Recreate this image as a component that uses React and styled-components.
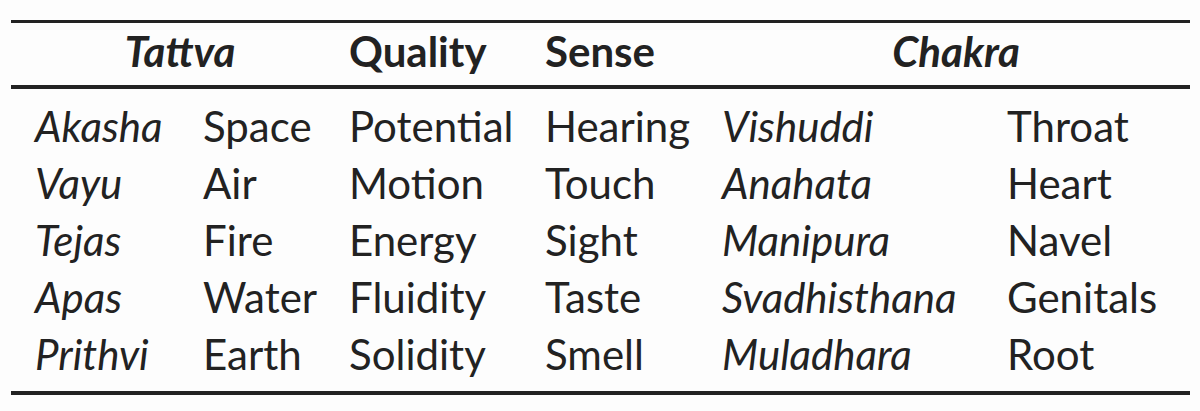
import React from "react";
import styled, { createGlobalStyle } from "styled-components";

const rows = [
  ["Akasha", "Space", "Potential", "Hearing", "Vishuddi", "Throat"],
  ["Vayu", "Air", "Motion", "Touch", "Anahata", "Heart"],
  ["Tejas", "Fire", "Energy", "Sight", "Manipura", "Navel"],
  ["Apas", "Water", "Fluidity", "Taste", "Svadhisthana", "Genitals"],
  ["Prithvi", "Earth", "Solidity", "Smell", "Muladhara", "Root"],
];

const widths = [176, 146, 196, 177, 285, 199];

// columns holding sanskrit names are set in italics
const italicCols = [0, 4];

export default function App() {
  return (
    <>
      <GlobalStyle />
      <Table>
        <colgroup>
          {widths.map((w, i) => (
            <col key={i} style={{ width: w }} />
          ))}
        </colgroup>
        <thead>
          <tr>
            <HeadCell colSpan={2} $italic $center>
              Tattva
            </HeadCell>
            <HeadCell>Quality</HeadCell>
            <HeadCell>Sense</HeadCell>
            <HeadCell colSpan={2} $italic $center>
              Chakra
            </HeadCell>
          </tr>
        </thead>
        <tbody>
          {rows.map((row) => (
            <tr key={row[0]}>
              {row.map((cell, i) => (
                <Cell key={i} $italic={italicCols.includes(i)}>
                  {cell}
                </Cell>
              ))}
            </tr>
          ))}
        </tbody>
      </Table>
    </>
  );
}

const GlobalStyle = createGlobalStyle`
  html, body {
    margin: 0;
    background: #fdfdfd;
  }
`;

const Table = styled.table`
  margin: 20px 0 0 11px;
  width: 1179px;
  table-layout: fixed;
  border-collapse: collapse;
  font-family: Lato, "Liberation Sans", sans-serif;
  font-size: 42px;
  line-height: 57px;
  color: #222;
  border-top: 3px solid #222;
  border-bottom: 4px solid #222;

  thead {
    border-bottom: 4px solid #222;
  }

  tbody tr:first-child td {
    padding-top: 9px;
  }

  tbody tr:last-child td {
    padding-bottom: 8px;
  }
`;

const HeadCell = styled.th`
  padding: 0 0 5px 16px;
  font-weight: 700;
  font-style: ${(p) => (p.$italic ? "italic" : "normal")};
  text-align: ${(p) => (p.$center ? "center" : "left")};
  white-space: nowrap;
`;

const Cell = styled.td`
  padding: 0 0 0 16px;
  font-style: ${(p) => (p.$italic ? "italic" : "normal")};
  white-space: nowrap;

  &:first-child {
    padding-left: 24px;
  }
`;
